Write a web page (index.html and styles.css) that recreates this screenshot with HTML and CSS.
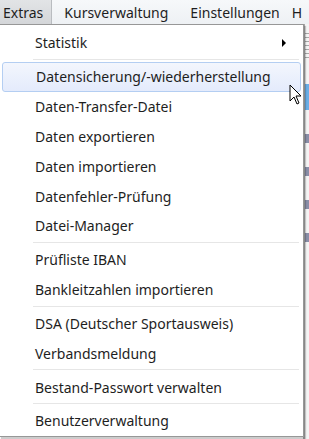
FILE: index.html
```html
<!DOCTYPE html>
<html lang="de">
<head>
<meta charset="utf-8">
<title>Extras</title>
<link rel="stylesheet" href="styles.css">
</head>
<body>
<div class="app">
  <div class="menubar">
    <div class="mb-item active">Extras</div>
    <div class="mb-item">Kursverwaltung</div>
    <div class="mb-item">Einstellungen</div>
    <div class="mb-item last">H</div>
  </div>
  <div class="workspace">
    <div class="content"></div>
    <div class="side">
      <div class="grid"></div>
      <div class="cell blue"></div>
      <div class="cell"></div>
      <div class="cell"></div>
      <div class="cell"></div>
      <div class="cell"></div>
    </div>
  </div>
  <div class="dropdown">
    <div class="item">Statistik<span class="arrow"></span></div>
    <div class="sep"></div>
    <div class="item hover">Datensicherung/-wiederherstellung</div>
    <div class="item">Daten-Transfer-Datei</div>
    <div class="item">Daten exportieren</div>
    <div class="item">Daten importieren</div>
    <div class="item">Datenfehler-Prüfung</div>
    <div class="item">Datei-Manager</div>
    <div class="sep"></div>
    <div class="item">Prüfliste IBAN</div>
    <div class="item">Bankleitzahlen importieren</div>
    <div class="sep"></div>
    <div class="item">DSA (Deutscher Sportausweis)</div>
    <div class="item">Verbandsmeldung</div>
    <div class="sep"></div>
    <div class="item">Bestand-Passwort verwalten</div>
    <div class="sep"></div>
    <div class="item">Benutzerverwaltung</div>
    <svg class="cursor" width="14" height="22" viewBox="0 0 14 22"><path d="M1 1 L1 17 L5 13 L8 20 L10 19 L7 12 L12 12 Z" fill="#fff" stroke="#000" stroke-width="1" stroke-linejoin="miter"/></svg>
  </div>
</div>
</body>
</html>
```
FILE: styles.css
```css
html, body {
  margin: 0;
  padding: 0;
}
body {
  width: 309px;
  height: 439px;
  overflow: hidden;
  background: #ffffff;
  font-family: "Noto Sans", "Open Sans", sans-serif;
  font-size: 14px;
  color: #1e1e1e;
}
.app {
  position: relative;
  width: 309px;
  height: 439px;
  display: flex;
  flex-direction: column;
}
.menubar {
  height: 24px;
  display: flex;
  align-items: stretch;
  background: linear-gradient(#f6f8fa, #eef1f4);
  flex: none;
}
.mb-item {
  display: flex;
  align-items: center;
  padding: 0 11px;
  white-space: nowrap;
}
.mb-item.active {
  padding: 0 8px 0 3px;
  background: linear-gradient(#e2e4e6, #d4d6d9);
  border-right: 1px solid #b9bcc0;
  margin-right: 1px;
}
.mb-item.last {
  padding-left: 1px;
}
.workspace {
  flex: 1;
  display: flex;
}
.content {
  flex: 1;
  background: #fff;
}
.side {
  width: 4px;
  border-left: 2px solid #a9a9a9;
  background: #f4f4f4;
  display: flex;
  flex-direction: column;
  gap: 24px;
  padding-top: 6px;
}
.grid {
  height: 30px;
  background: repeating-linear-gradient(#f4f4f4 0 3px, #a8a8a8 3px 4px);
}
.cell {
  height: 9px;
  background: #8a8fa8;
}
.cell.blue {
  height: 26px;
  background: #6aaee6;
}
.dropdown {
  position: absolute;
  left: -1px;
  top: 24px;
  width: 305px;
  height: 413px;
  padding-top: 3px;
  box-sizing: border-box;
  background: #fff;
  border: 1px solid #979797;
  box-shadow: 2px 2px 1px rgba(0, 0, 0, 0.2);
  display: flex;
  flex-direction: column;
}
.item {
  height: 30px;
  display: flex;
  align-items: center;
  padding-left: 35px;
  position: relative;
  white-space: nowrap;
  box-sizing: border-box;
}
.item.hover {
  margin: 0 2px;
  padding-left: 33px;
  border: 1px solid #b4cef2;
  border-radius: 3px;
  background: linear-gradient(#f3f6fd, #e4ebfc);
}
.arrow {
  position: absolute;
  right: 17px;
  top: 11px;
  width: 0;
  height: 0;
  border-top: 4px solid transparent;
  border-bottom: 4px solid transparent;
  border-left: 4px solid #000;
}
.sep {
  height: 3px;
  margin: 1px 4px 0 33px;
  border-top: 1px solid #e6e6e6;
  box-sizing: border-box;
}
.cursor {
  position: absolute;
  left: 289px;
  top: 59px;
}
```
